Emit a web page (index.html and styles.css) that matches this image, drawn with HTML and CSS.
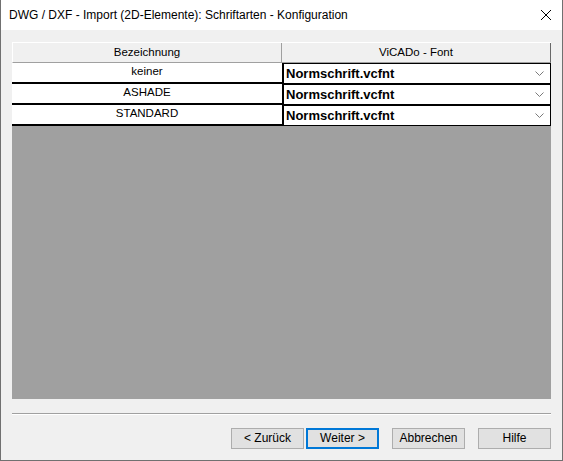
FILE: index.html
```html
<!DOCTYPE html>
<html>
<head>
<meta charset="utf-8">
<link rel="stylesheet" href="styles.css">
</head>
<body>
<div class="window">
  <div class="titlebar">
    <span class="title">DWG / DXF - Import (2D-Elemente): Schriftarten - Konfiguration</span>
    <svg class="close" width="12" height="12" viewBox="0 0 12 12"><path d="M1 1L11 11M11 1L1 11" stroke="#000" stroke-width="1" fill="none"/></svg>
  </div>
  <div class="content">
    <div class="grid">
      <div class="row head">
        <div class="c1">Bezeichnung</div>
        <div class="c2">ViCADo - Font</div>
      </div>
      <div class="row data">
        <div class="c1">keiner</div>
        <div class="c2"><div class="combo"><span>Normschrift.vcfnt</span><svg class="chev" width="9" height="5" viewBox="0 0 9 5"><path d="M0.5 0.5L4.5 4.5L8.5 0.5" stroke="#7a7a7a" fill="none"/></svg></div></div>
      </div>
      <div class="row data">
        <div class="c1">ASHADE</div>
        <div class="c2"><div class="combo"><span>Normschrift.vcfnt</span><svg class="chev" width="9" height="5" viewBox="0 0 9 5"><path d="M0.5 0.5L4.5 4.5L8.5 0.5" stroke="#7a7a7a" fill="none"/></svg></div></div>
      </div>
      <div class="row data">
        <div class="c1">STANDARD</div>
        <div class="c2"><div class="combo"><span>Normschrift.vcfnt</span><svg class="chev" width="9" height="5" viewBox="0 0 9 5"><path d="M0.5 0.5L4.5 4.5L8.5 0.5" stroke="#7a7a7a" fill="none"/></svg></div></div>
      </div>
    </div>
    <div class="sep"></div>
    <div class="buttons">
      <div class="btn">&lt; Zurück</div>
      <div class="btn default">Weiter &gt;</div>
      <div class="btn gapl">Abbrechen</div>
      <div class="btn gapl">Hilfe</div>
    </div>
  </div>
</div>
</body>
</html>
```

FILE: styles.css
```css
html, body {
  margin: 0;
  padding: 0;
  background: #f0f0f0;
}
.window {
  width: 563px;
  height: 461px;
  box-sizing: border-box;
  border: 1px solid #707070;
  border-top: none;
  background: #f0f0f0;
  display: flex;
  flex-direction: column;
  font-family: "Liberation Sans", Arial, sans-serif;
}
.titlebar {
  height: 30px;
  background: #fff;
  display: flex;
  align-items: center;
  justify-content: space-between;
  padding: 0 10px 0 8px;
  flex: none;
}
.title {
  font-size: 12px;
  color: #000;
}
.close {
  display: block;
}
.content {
  flex: 1;
  padding: 12px 11px 0 11px;
  display: flex;
  flex-direction: column;
}
.grid {
  height: 357px;
  background: #a0a0a0;
  display: flex;
  flex-direction: column;
  flex: none;
}
.row {
  display: flex;
  flex: none;
}
.c1 {
  width: 270px;
  box-sizing: border-box;
  text-align: center;
}
.c2 {
  flex: 1;
  box-sizing: border-box;
}
.head {
  height: 20px;
  background: #f0f0f0;
  border-top: 1px solid #fff;
  font-size: 11.5px;
  color: #000;
}
.head .c1 {
  border-left: 1px solid #fff;
  border-right: 1px solid #a0a0a0;
  border-bottom: 1px solid #a0a0a0;
  line-height: 18px;
}
.head .c2 {
  text-align: center;
  border-right: 1px solid #696969;
  border-bottom: 1px solid #a0a0a0;
  line-height: 18px;
}
.data {
  height: 21px;
  background: #fff;
}
.data .c1 {
  font-size: 11.5px;
  line-height: 17px;
  border-bottom: 2px solid #000;
  height: 21px;
}
.data .c2 {
  height: 21px;
  border-bottom: 1px solid #000;
}
.combo {
  height: 20px;
  box-sizing: border-box;
  border-left: 2px solid #000;
  border-top: 1px solid #000;
  border-right: 1px solid #000;
  display: flex;
  align-items: center;
  justify-content: space-between;
  padding: 0 6px 0 2px;
  font-weight: bold;
  font-size: 13px;
  color: #000;
}
.chev {
  display: block;
}
.sep {
  height: 1px;
  margin-top: 14px;
  background: #a0a0a0;
  border-bottom: 1px solid #fff;
  flex: none;
}
.buttons {
  display: flex;
  justify-content: flex-end;
  margin-top: 13px;
  gap: 2px;
}
.btn {
  width: 73px;
  height: 21px;
  box-sizing: border-box;
  border: 1px solid #adadad;
  background: #e1e1e1;
  font-size: 12px;
  line-height: 19px;
  text-align: center;
  color: #000;
}
.btn.default {
  border: 2px solid #0078d7;
  line-height: 17px;
}
.btn.gapl {
  margin-left: 11px;
}
```
